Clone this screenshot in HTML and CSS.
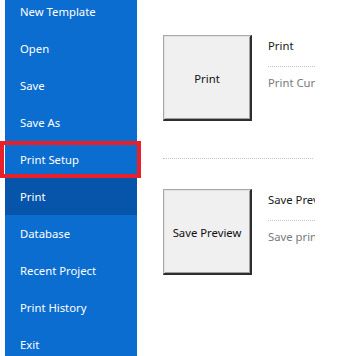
FILE: index.html
```html
<!DOCTYPE html>
<html>
<head>
    <title>Backstage</title>
    <link rel="stylesheet" href="styles.css">
</head>
<body>

    <div class="backstage">
        <!-- left menu -->
        <ul class="menu">
            <li>New Template</li>
            <li>Open</li>
            <li>Save</li>
            <li>Save As</li>
            <li class="marked">Print Setup</li>
            <li class="active">Print</li>
            <li>Database</li>
            <li>Recent Project</li>
            <li>Print History</li>
            <li>Exit</li>
        </ul>

        <!-- print options -->
        <div class="content">
            <div class="option">
                <button class="tile">Print</button>
                <div class="info">
                    <div class="info-title">Print</div>
                    <div class="info-sep"></div>
                    <div class="info-desc">Print Current Label</div>
                </div>
            </div>

            <div class="divider"></div>

            <div class="option">
                <button class="tile">Save Preview</button>
                <div class="info">
                    <div class="info-title">Save Preview</div>
                    <div class="info-sep"></div>
                    <div class="info-desc">Save print preview</div>
                </div>
            </div>
        </div>
    </div>

</body>
</html>
```

FILE: styles.css
```css
body { margin: 0; background: #fff; font-family: "Noto Sans", "Open Sans", sans-serif; font-size: 11.3px; overflow: hidden; height: 356px; }
.backstage { display: flex; align-items: flex-start; }

/* menu */
.menu { list-style: none; margin: -7px 0 0 5px; padding: 0; width: 132px; background: #0b6dcf; flex-shrink: 0; }
.menu li { position: relative; height: 37px; line-height: 38px; padding-left: 15px; color: #fff; }
.menu li.active { background: #0655aa; }
.menu li.marked::after { content: ""; position: absolute; left: -5px; right: -4px; top: 0; bottom: 0; border: 4px solid #e8202a; }

/* content */
.content { padding: 35px 0 0 26px; }
.option { display: flex; align-items: flex-start; }
.tile { width: 89px; height: 86px; margin: 0 16px 0 0; padding: 2px 0 0; background: #f0f0f0; font-family: inherit; font-size: 11.3px; color: #111;
    border-style: solid; border-width: 1px 2px 2px 1px; border-color: #a8a8a8 #2e2e2e #2e2e2e #a8a8a8;
    box-shadow: inset 1px 1px 0 #e2e2e2, inset -1px -1px 0 #a0a0a0; }
.info { width: 47px; overflow: hidden; white-space: nowrap; padding-top: 3px; }
.info-title { line-height: 16px; color: #1a1a1a; }
.info-sep { margin-top: 12px; border-top: 1px dotted #c4c4c4; }
.info-desc { margin-top: 8px; line-height: 16px; color: #7a7a7a; }
.divider { width: 150px; margin: 37px 0 30px; border-top: 1px dotted #c4c4c4; }
```
